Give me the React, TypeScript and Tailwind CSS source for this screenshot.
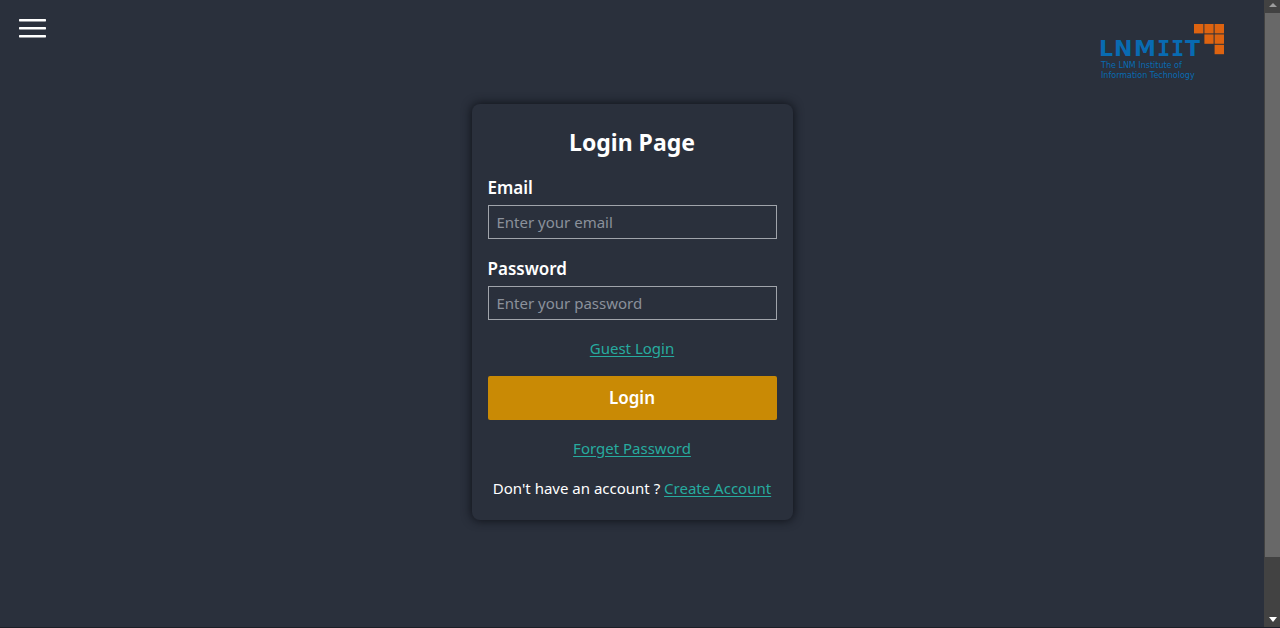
import type { ComponentProps } from "react";

type FieldProps = ComponentProps<"input"> & { id: string; label: string };

function Field({ id, label, ...rest }: FieldProps) {
  return (
    <div className="flex flex-col gap-[3px]">
      <label htmlFor={id} className="text-[17px] leading-7 font-semibold">
        {label}
      </label>
      <input
        id={id}
        className="h-[34px] w-full border border-[#a0a4ab] bg-transparent px-2 text-[15px] text-white outline-none placeholder:text-[#8b919b]"
        {...rest}
      />
    </div>
  );
}

function TextLink({ children }: { children: string }) {
  return (
    <a href="#" className="text-[#27ab9f] underline underline-offset-2">
      {children}
    </a>
  );
}

function MenuButton() {
  return (
    <button type="button" aria-label="Open menu" className="h-6 w-7">
      <svg viewBox="0 0 28 24" className="h-6 w-7" fill="#ffffff">
        <rect x="0" y="3" width="27" height="2.4" rx="0.6" />
        <rect x="0" y="11" width="27" height="2.4" rx="0.6" />
        <rect x="0" y="19" width="27" height="2.4" rx="0.6" />
      </svg>
    </button>
  );
}

function Logo() {
  return (
    <svg viewBox="0 0 126 58" className="h-[58px] w-[126px]" role="img" aria-label="LNMIIT">
      <g fill="#dd6310">
        <rect x="94" y="0" width="9.4" height="9.4" />
        <rect x="104.4" y="0" width="9.2" height="9.4" />
        <rect x="114.6" y="0" width="9.4" height="9.4" />
        <rect x="104.4" y="10.4" width="9.2" height="9.4" />
        <rect x="114.6" y="10.4" width="9.4" height="9.4" />
        <rect x="114.6" y="20.8" width="9.4" height="9.4" />
      </g>
      <g fill="#086bb2" fontFamily="'DejaVu Sans', sans-serif">
        <text y="32" fontSize="22" fontWeight="700">
          <tspan x="-1">L</tspan>
          <tspan x="14">N</tspan>
          <tspan x="34">M</tspan>
          <tspan x="57" fontFamily="'DejaVu Sans Mono', monospace">I</tspan>
          <tspan x="71" fontFamily="'DejaVu Sans Mono', monospace">I</tspan>
          <tspan x="85">T</tspan>
        </text>
        <text x="1" y="44" fontSize="8">The LNM Institute of</text>
        <text x="1" y="54" fontSize="8">Information Technology</text>
      </g>
    </svg>
  );
}

function ScrollRail() {
  return (
    <div aria-hidden="true" className="flex w-4 flex-col bg-[#424242]">
      <div className="flex h-[13px] items-center justify-center pb-1 pl-px">
        <svg viewBox="0 0 8 4" className="h-1 w-2" fill="#9c9c9c">
          <path d="M4 0 8 4H0z" />
        </svg>
      </div>
      <div className="ml-px grow bg-[#686868]" />
      <div className="flex h-[70px] items-end justify-center pb-[5px] pl-px">
        <svg viewBox="0 0 8 5" className="h-[5px] w-2" fill="#ffffff">
          <path d="M0 0H8L4 5z" />
        </svg>
      </div>
    </div>
  );
}

export default function App() {
  return (
    <div className="flex min-h-screen border-b border-[#1b1f27] bg-[#2a303c] font-['Noto_Sans','Open_Sans',sans-serif] text-white">
      <div className="flex grow flex-col">
        <header className="flex items-start justify-between pt-4 pr-[38px] pl-[19px]">
          <MenuButton />
          <div className="pt-2">
            <Logo />
          </div>
        </header>
        <main className="flex justify-center pt-[22px] pb-12">
          <form
            className="flex w-[321px] flex-col rounded-lg px-4 pt-[22px] pb-5 text-[15px] leading-6 shadow-[0_0_10px_1px_#11141b]"
            onSubmit={(event) => event.preventDefault()}
          >
            <h1 className="text-center text-[23px] leading-8 font-bold">Login Page</h1>
            <div className="flex flex-col gap-4 pt-4">
              <Field id="email" label="Email" type="email" placeholder="Enter your email" />
              <Field id="password" label="Password" type="password" placeholder="Enter your password" />
            </div>
            <div className="flex flex-col gap-4 pt-4 text-center">
              <p>
                <TextLink>Guest Login</TextLink>
              </p>
              <button
                type="submit"
                className="h-11 w-full rounded-xs bg-[#c98a05] text-[17px] font-semibold text-white"
              >
                Login
              </button>
              <p>
                <TextLink>Forget Password</TextLink>
              </p>
              <p className="whitespace-nowrap">
                Don't have an account ? <TextLink>Create Account</TextLink>
              </p>
            </div>
          </form>
        </main>
      </div>
      <ScrollRail />
    </div>
  );
}
